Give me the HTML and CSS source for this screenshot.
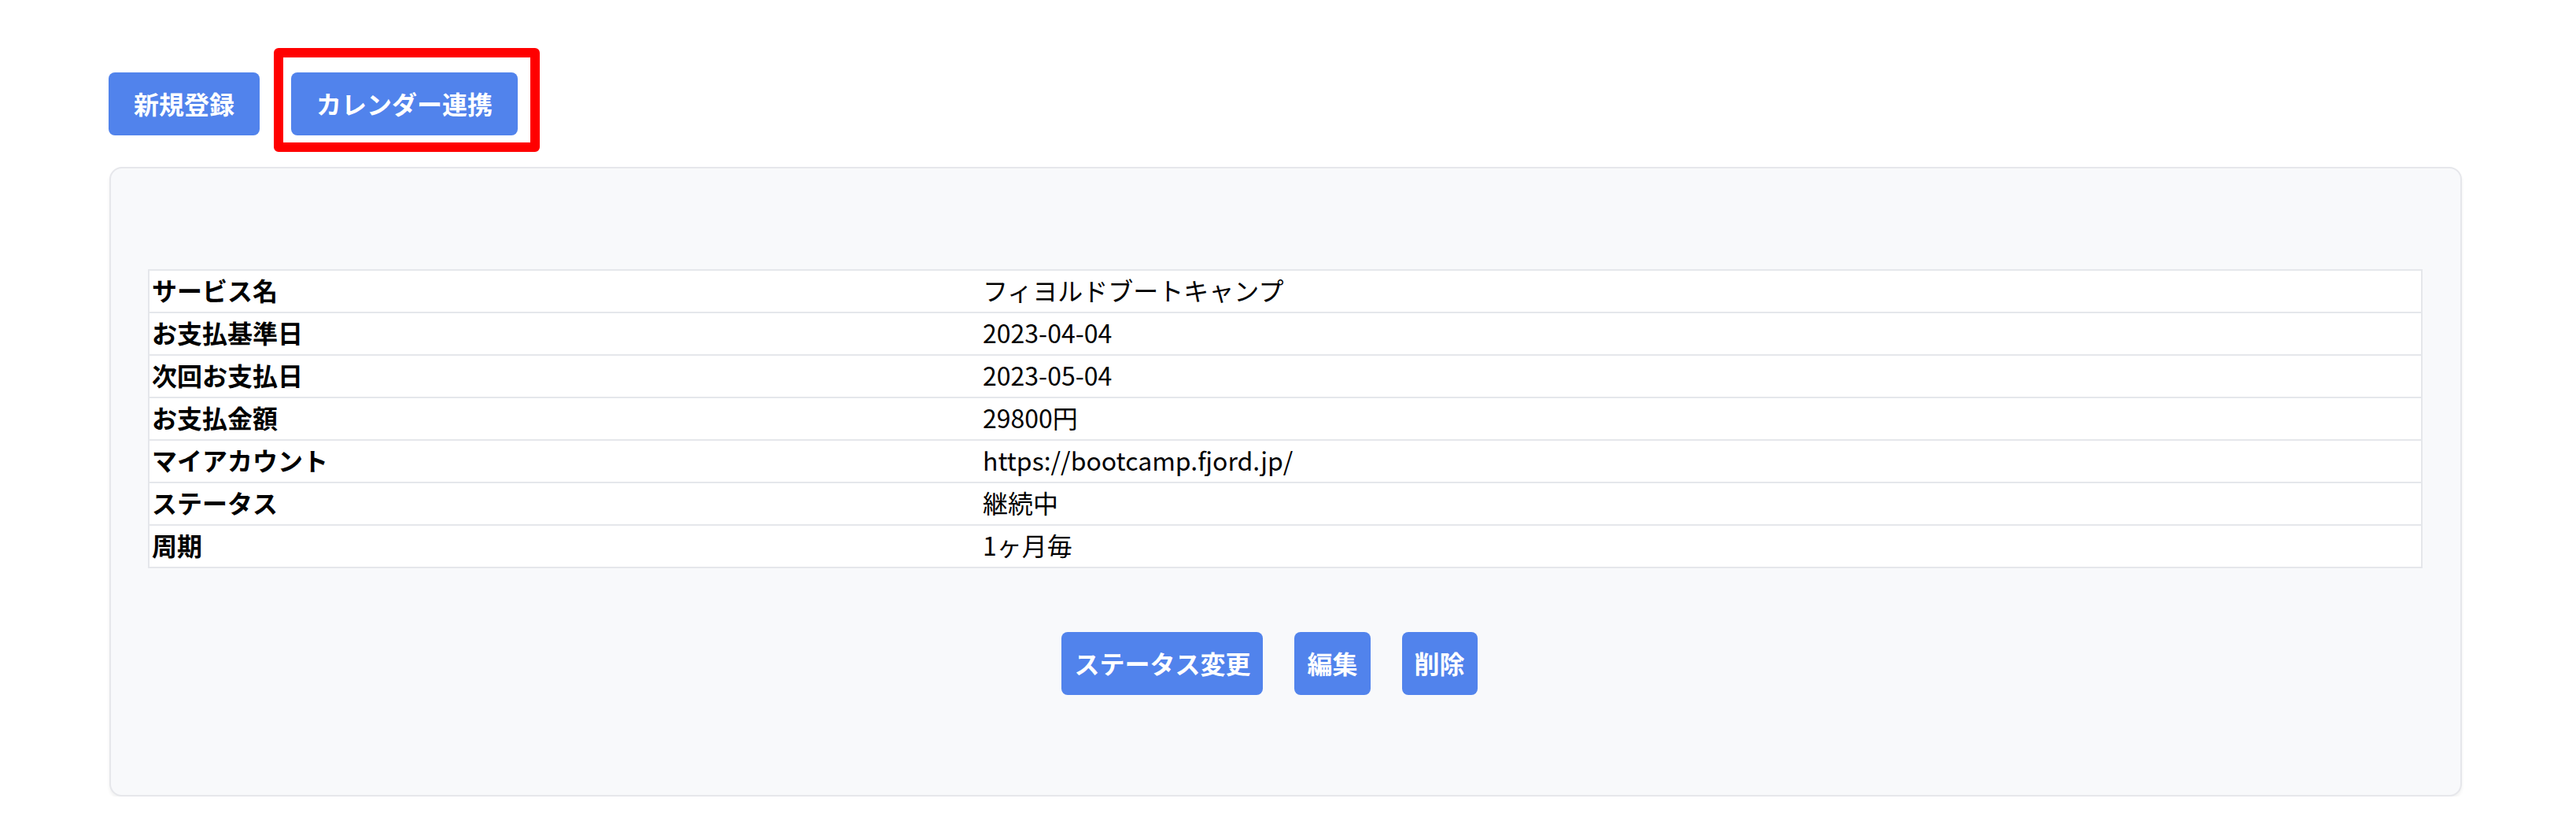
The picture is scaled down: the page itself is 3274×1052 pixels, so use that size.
FILE: index.html
```html
<!DOCTYPE html>
<html lang="ja">
<head>
<meta charset="utf-8">
<title>サブスクリプション詳細</title>
<link rel="stylesheet" href="styles.css">
</head>
<body>
<div class="page">
  <div class="actions">
    <a class="btn btn-top">新規登録</a>
    <a class="btn btn-top btn-marked">カレンダー連携</a>
  </div>
  <div class="card">
    <table class="detail">
      <colgroup><col class="col-label"><col></colgroup>
      <tbody>
        <tr><th>サービス名</th><td>フィヨルドブートキャンプ</td></tr>
        <tr><th>お支払基準日</th><td>2023-04-04</td></tr>
        <tr><th>次回お支払日</th><td>2023-05-04</td></tr>
        <tr><th>お支払金額</th><td>29800円</td></tr>
        <tr><th>マイアカウント</th><td>https://bootcamp.fjord.jp/</td></tr>
        <tr><th>ステータス</th><td>継続中</td></tr>
        <tr><th>周期</th><td>1ヶ月毎</td></tr>
      </tbody>
    </table>
    <div class="card-actions">
      <a class="btn btn-small">ステータス変更</a>
      <a class="btn btn-small">編集</a>
      <a class="btn btn-small">削除</a>
    </div>
  </div>
</div>
</body>
</html>
```
FILE: styles.css
```css
html, body {
  margin: 0;
  padding: 0;
  background: #ffffff;
}
body {
  font-family: "Noto Sans CJK JP", "Noto Sans", sans-serif;
  color: #000000;
}
.page {
  padding: 92px 145px 0 138px;
}
.actions {
  display: flex;
  gap: 40px;
  align-items: center;
}
.btn {
  display: inline-flex;
  align-items: center;
  justify-content: center;
  height: 80px;
  background: #5183ec;
  color: #ffffff;
  font-weight: 700;
  font-size: 32px;
  line-height: 1;
  border-radius: 8px;
  box-sizing: border-box;
  text-decoration: none;
  white-space: nowrap;
  padding-bottom: 3px;
}
.btn-top {
  padding-left: 32px;
  padding-right: 32px;
}
.btn-marked {
  position: relative;
}
.btn-marked::after {
  content: "";
  position: absolute;
  left: -22px;
  top: -31px;
  right: -28px;
  bottom: -21px;
  border: 12px solid #ff0000;
  border-radius: 6px;
}
.card {
  margin: 40px 0 0 1px;
  background: #f8f9fb;
  border: 2px solid #e6e7eb;
  border-radius: 16px;
  box-shadow: 0 3px 4px rgba(0, 0, 0, 0.06);
  padding: 128px 48px 127px 47px;
}
.detail {
  width: 100%;
  border-collapse: collapse;
  table-layout: fixed;
  background: #ffffff;
  border: 2px solid #e5e7eb;
  font-size: 32px;
}
.col-label {
  width: 1057px;
}
.detail th,
.detail td {
  border-top: 2px solid #e5e7eb;
  padding: 0 3px 4px;
  height: 48px;
  line-height: 48px;
  text-align: left;
  white-space: nowrap;
}
.detail th {
  font-weight: 700;
}
.detail td {
  font-weight: 400;
}
.card-actions {
  margin-top: 81px;
  display: flex;
  justify-content: center;
}
.btn-small {
  padding-left: 16px;
  padding-right: 16px;
  margin-right: 40px;
}
```
